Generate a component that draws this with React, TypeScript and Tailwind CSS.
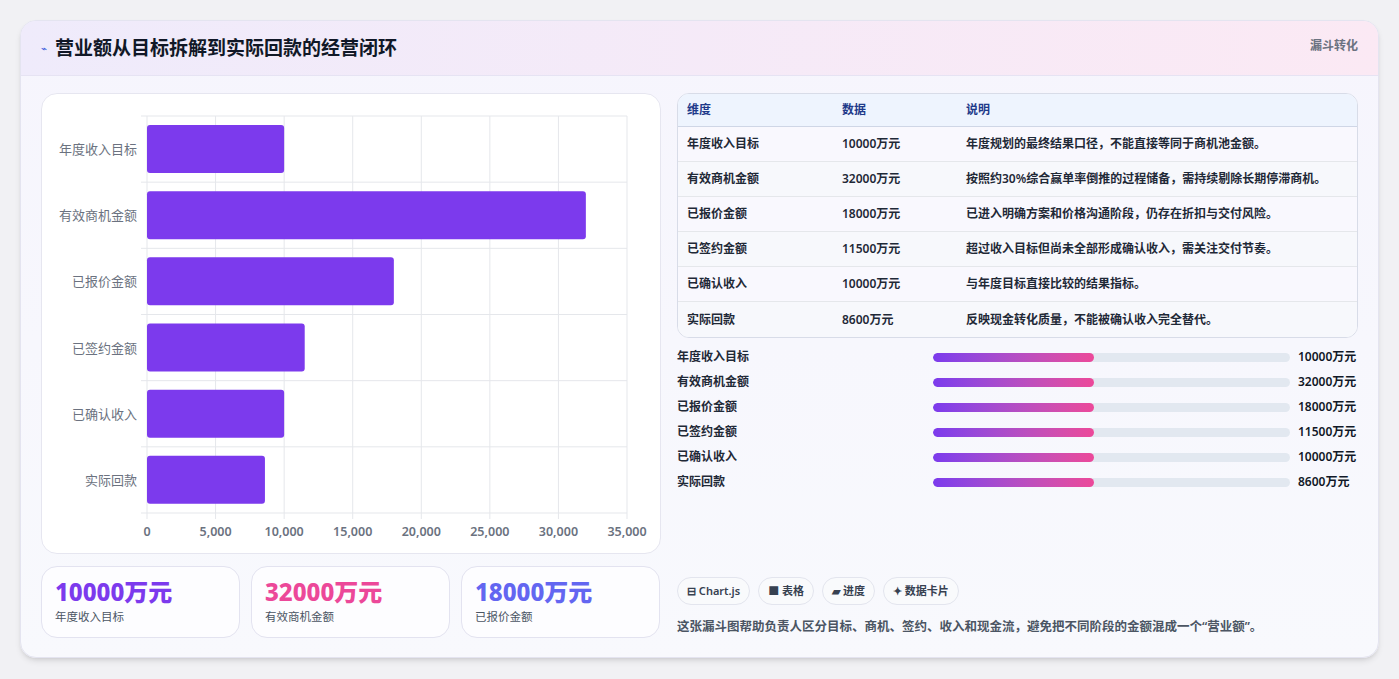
import React from "react";

const F = { fontFamily: '"Noto Sans", "Noto Sans CJK SC", sans-serif' };
const rows = [
  ["年度收入目标", 10000, "年度规划的最终结果口径，不能直接等同于商机池金额。"],
  ["有效商机金额", 32000, "按照约30%综合赢单率倒推的过程储备，需持续剔除长期停滞商机。"],
  ["已报价金额", 18000, "已进入明确方案和价格沟通阶段，仍存在折扣与交付风险。"],
  ["已签约金额", 11500, "超过收入目标但尚未全部形成确认收入，需关注交付节奏。"],
  ["已确认收入", 10000, "与年度目标直接比较的结果指标。"],
  ["实际回款", 8600, "反映现金转化质量，不能被确认收入完全替代。"],
] as const;

function Chart() {
  const x0 = 105, w = 480, y0 = 22, h = 397;
  const sx = (v: number) => x0 + (v / 35000) * w;
  const band = h / 6;
  return (
    <svg width="618" height="460" style={F}>
      {[0, 1, 2, 3, 4, 5, 6, 7].map((i) => (
        <line key={i} x1={x0 + (i * w) / 7} x2={x0 + (i * w) / 7} y1={y0} y2={y0 + h + 6} stroke="#e5e7eb" />
      ))}
      {[0, 1, 2, 3, 4, 5, 6].map((i) => (
        <line key={i} x1={x0 - 6} x2={x0 + w} y1={y0 + i * band} y2={y0 + i * band} stroke="#e5e7eb" />
      ))}
      {rows.map((r, i) => (
        <g key={i}>
          <rect x={x0} y={y0 + i * band + 9} width={sx(r[1]) - x0} height={48} rx={3} fill="#7c3aed" />
          <text x={x0 - 10} y={y0 + i * band + band / 2 + 5} textAnchor="end" fontSize="13" fill="#6b7280">{r[0]}</text>
        </g>
      ))}
      {[0, 1, 2, 3, 4, 5, 6, 7].map((i) => (
        <text key={i} x={x0 + (i * w) / 7} y={y0 + h + 23} textAnchor="middle" fontSize="12.5" fontWeight="600" fill="#6b7280">{(i * 5000).toLocaleString("en-US")}</text>
      ))}
    </svg>
  );
}

export default function App() {
  return (
    <div className="min-h-[679px] bg-[#f1f1f4] pt-5 px-5" style={F}>
      <div className="w-[1359px] h-[638px] rounded-2xl border border-[#e4e4f0] bg-gradient-to-b from-[#f6f5fd] to-[#f8f9fd] shadow-md overflow-hidden">
        <div className="h-[55px] flex items-center justify-between px-5 bg-gradient-to-r from-[#efebfb] to-[#fbe9f4] border-b border-[#e6e3f3]">
          <div className="flex items-center gap-2">
            <span className="text-[10px] text-[#3b5bdb]">⌁</span>
            <span className="text-[19px] font-bold text-[#111827]">营业额从目标拆解到实际回款的经营闭环</span>
          </div>
          <span className="text-[12px] font-semibold text-[#6b7280] self-start mt-4">漏斗转化</span>
        </div>
        <div className="flex gap-4 px-5 pt-[17px]">
          <div className="w-[620px] flex flex-col gap-3">
            <div className="h-[461px] rounded-2xl bg-white border border-[#e6e6f0]">
              <Chart />
            </div>
            <div className="flex gap-[11px]">
              {[["10000万元", "text-[#7c3aed]"], ["32000万元", "text-[#ec4899]"], ["18000万元", "text-[#6366f1]"]].map(([v, c], i) => (
                <div key={i} className="w-[199px] h-[72px] rounded-2xl bg-white/70 border border-[#e3e3f0] px-[13px] pt-[9px]">
                  <div className={`text-[24px] font-extrabold leading-[32px] ${c}`}>{v}</div>
                  <div className="text-[11.5px] text-[#4b5563]">{["年度收入目标", "有效商机金额", "已报价金额"][i]}</div>
                </div>
              ))}
            </div>
          </div>
          <div className="w-[685px] flex flex-col">
            <div className="rounded-xl border border-[#d8dce8] overflow-hidden bg-white text-[12px]">
              <div className="flex h-[33px] items-center bg-[#eef4fe] border-b border-[#cfd6e6] font-semibold text-[#1e3a8a]">
                <div className="w-[164px] pl-[9px]">维度</div>
                <div className="w-[124px]">数据</div>
                <div>说明</div>
              </div>
              {rows.map((r, i) => (
                <div key={i} className={`flex h-[35px] items-center font-semibold text-[#1f2937] ${i < 5 ? "border-b border-[#e5e7eb]" : ""} ${i % 2 ? "bg-[#f7f8fc]" : "bg-[#f9f8fe]"}`}>
                  <div className="w-[164px] pl-[9px]">{r[0]}</div>
                  <div className="w-[124px]">{r[1]}万元</div>
                  <div>{r[2]}</div>
                </div>
              ))}
            </div>
            <div className="mt-[11px] flex flex-col gap-[9px]">
              {rows.map((r, i) => (
                <div key={i} className="flex items-center h-[16px] text-[12px] font-semibold text-[#1f2937]">
                  <div className="w-[256px]">{r[0]}</div>
                  <div className="w-[357px] h-[9px] rounded-full bg-[#e2e8f0] overflow-hidden">
                    <div className="h-full w-[45%] rounded-full bg-gradient-to-r from-[#7c3aed] to-[#ec4899]" />
                  </div>
                  <div className="ml-2 text-[#111827]">{r[1]}万元</div>
                </div>
              ))}
            </div>
            <div className="mt-[87px] flex gap-2">
              {["⊟ Chart.js", "■ 表格", "▰ 进度", "✦ 数据卡片"].map((t) => (
                <div key={t} className="h-[28px] px-[9px] rounded-full border border-[#e3e5ee] bg-[#f9fafc] text-[11px] font-semibold text-[#374151] flex items-center">{t}</div>
              ))}
            </div>
            <div className="mt-[13px] text-[12.5px] font-semibold text-[#4b5563]">这张漏斗图帮助负责人区分目标、商机、签约、收入和现金流，避免把不同阶段的金额混成一个“营业额”。</div>
          </div>
        </div>
      </div>
    </div>
  );
}
